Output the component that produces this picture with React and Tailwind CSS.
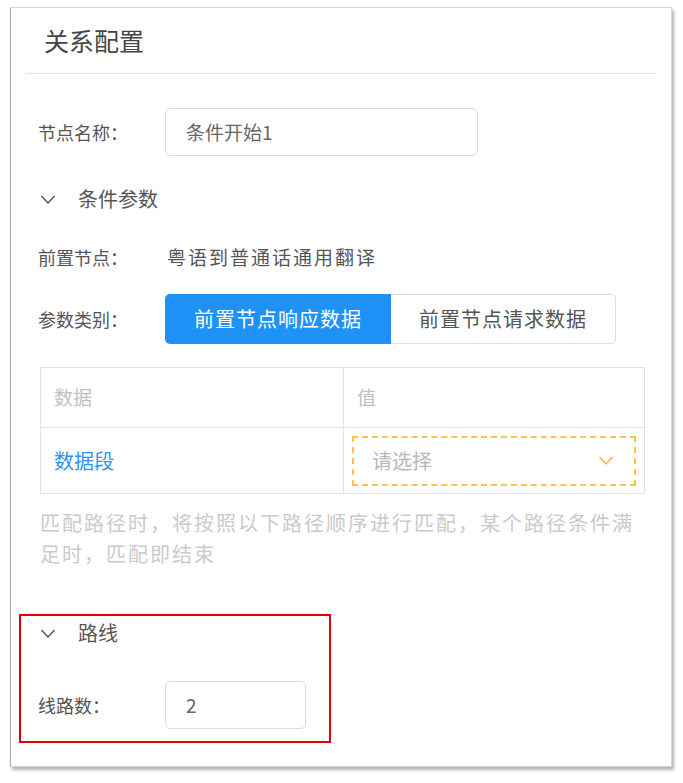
import { useState } from "react";

const font = { fontFamily: '"Noto Sans CJK SC", "Noto Sans", sans-serif' };

function Chevron({ className = "" }) {
  return (
    <svg viewBox="0 0 16 10" className={className} fill="none" stroke="currentColor" strokeWidth="1.5">
      <polyline points="1.5,1.5 8,8.5 14.5,1.5" />
    </svg>
  );
}

function SectionTitle({ text }) {
  return (
    <div className="flex items-center h-[30px]">
      <Chevron className="w-[16px] h-[11px] ml-[2px] text-[#555]" />
      <span className="ml-[22px] text-[20px] text-[#555]">{text}</span>
    </div>
  );
}

export default function App() {
  const [paramType, setParamType] = useState("response");

  return (
    <div className="w-[683px] h-[783px] bg-white" style={font}>
      <div className="relative top-[7px] left-[10px] w-[662px] h-[760px] bg-white border border-[#d6d6d6] border-l-[#a8a8a8] shadow-[2px_3px_3px_rgba(0,0,0,0.3)]">
        <div className="h-[65px] flex items-center pl-[33px] text-[25px] text-[#444]">关系配置</div>
        <div className="mx-[15px] h-px bg-[#e2e2e2]" />

        <div className="pl-[27px]">
          <div className="mt-[34px] flex items-center h-[48px]">
            <span className="w-[127px] text-[18px] text-[#555]">节点名称：</span>
            <div className="w-[313px] h-[48px] border border-[#dcdcdc] rounded-[5px] flex items-center pl-[20px] text-[19px] text-[#666]">
              条件开始1
            </div>
          </div>

          <div className="mt-[28px]">
            <SectionTitle text="条件参数" />
          </div>

          <div className="mt-[28px] flex items-center h-[30px]">
            <span className="w-[129px] text-[18px] text-[#555]">前置节点：</span>
            <span className="text-[19px] tracking-[2px] text-[#555]">粤语到普通话通用翻译</span>
          </div>

          <div className="mt-[22px] flex items-center h-[50px]">
            <span className="w-[127px] text-[18px] text-[#555]">参数类别：</span>
            <div className="flex h-[50px]">
              <button
                onClick={() => setParamType("response")}
                className={
                  paramType === "response"
                    ? "w-[226px] h-[50px] rounded-l-[5px] bg-[#1f92f8] text-white text-[20px] tracking-[1px]"
                    : "w-[226px] h-[50px] rounded-l-[5px] border border-[#dcdcdc] text-[#555] text-[20px] tracking-[1px]"
                }
              >
                前置节点响应数据
              </button>
              <button
                onClick={() => setParamType("request")}
                className={
                  paramType === "request"
                    ? "w-[225px] h-[50px] rounded-r-[5px] bg-[#1f92f8] text-white text-[20px] tracking-[1px]"
                    : "w-[225px] h-[50px] rounded-r-[5px] border border-l-0 border-[#dcdcdc] text-[#555] text-[20px] tracking-[1px]"
                }
              >
                前置节点请求数据
              </button>
            </div>
          </div>

          <div className="mt-[23px] ml-[2px] w-[605px] border border-[#e3e3e3]">
            <div className="grid grid-cols-[303px_1fr] h-[59px]">
              <div className="flex items-center pl-[13px] text-[19px] text-[#c0c0c0] border-r border-[#e3e3e3]">数据</div>
              <div className="flex items-center pl-[13px] text-[19px] text-[#c0c0c0]">值</div>
            </div>
            <div className="grid grid-cols-[303px_1fr] h-[66px] border-t border-[#e3e3e3]">
              <div className="flex items-center pl-[13px] text-[20px] text-[#2d95f5] border-r border-[#e3e3e3]">数据段</div>
              <div className="flex items-center pl-[8px] pr-[8px]">
                <div className="flex-1 h-[50px] border-2 border-dashed border-[#fcc24a] flex items-center justify-between pl-[18px] pr-[20px]">
                  <span className="text-[20px] text-[#b8b8b8]">请选择</span>
                  <Chevron className="w-[16px] h-[11px] text-[#f5b43c]" />
                </div>
              </div>
            </div>
          </div>

          <p className="mt-[13px] ml-[2px] w-[605px] text-[20px] leading-[31px] tracking-[2px] text-[#cacaca]">
            匹配路径时，将按照以下路径顺序进行匹配，某个路径条件满足时，匹配即结束
          </p>

          <div className="mt-[45px] -ml-[19px] w-[312px] border-2 border-[#e30000] pl-[17px] pt-[2px] pb-[12px]">
            <SectionTitle text="路线" />
            <div className="mt-[33px] flex items-center h-[48px]">
              <span className="w-[127px] text-[18px] text-[#555]">线路数：</span>
              <div className="w-[141px] h-[48px] border border-[#dcdcdc] rounded-[5px] flex items-center pl-[20px] text-[19px] text-[#666]">
                2
              </div>
            </div>
          </div>
        </div>
      </div>
    </div>
  );
}
